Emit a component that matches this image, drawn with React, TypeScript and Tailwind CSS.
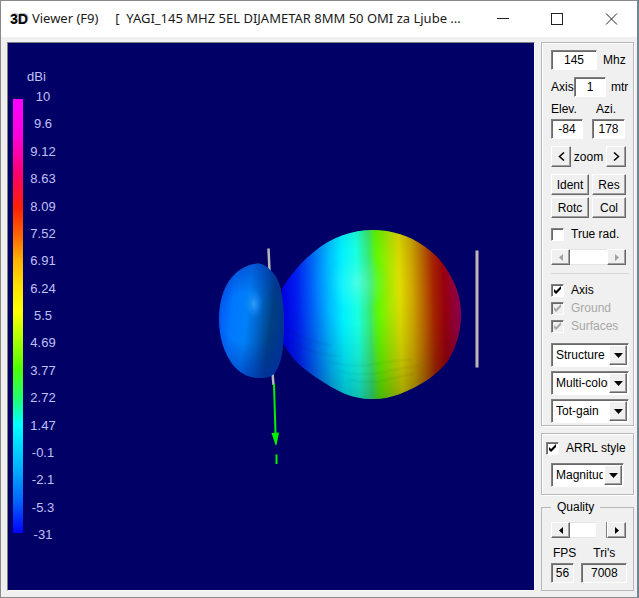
import type { ReactNode } from "react";
import clsx from "clsx";

const gains = [
  "10", "9.6", "9.12", "8.63", "8.09", "7.52", "6.91", "6.24", "5.5",
  "4.69", "3.77", "2.72", "1.47", "-0.1", "-2.1", "-5.3", "-31",
];

const raised =
  "border border-t-white border-l-white border-r-[#696969] border-b-[#696969] bg-[#f0f0f0] shadow-[inset_-1px_-1px_0_#a0a0a0]";
const sunken =
  "border border-t-[#808080] border-l-[#808080] border-r-white border-b-white shadow-[inset_1px_1px_0_#696969]";

function TitleBar() {
  return (
    <header className="flex h-9 items-center bg-white text-[13px] text-[#1a1a1a]">
      <span className="pl-[9px] font-['Liberation_Sans'] text-sm font-bold text-black [text-shadow:1px_-1px_0_#bbbbbb]">
        3D
      </span>
      <h1 className="min-w-0 flex-1 truncate whitespace-pre pl-1 font-['Noto_Sans']">
        {"Viewer (F9)     [  YAGI_145 MHZ 5EL DIJAMETAR 8MM 50 OMI za Ljube ..."}
      </h1>
      <div className="flex">
        <button aria-label="Minimize" className="grid h-9 w-12 place-items-center">
          <svg width="13" height="13" viewBox="0 0 13 13" stroke="#222" fill="none">
            <path d="M1 5.5h12" />
          </svg>
        </button>
        <button aria-label="Maximize" className="grid h-9 w-[60px] place-items-center">
          <svg width="13" height="13" viewBox="0 0 13 13" stroke="#222" fill="none">
            <rect x="1.5" y="0.5" width="11" height="11" />
          </svg>
        </button>
        <button aria-label="Close" className="grid h-9 w-[51px] place-items-center">
          <svg width="13" height="13" viewBox="0 0 13 13" stroke="#222" fill="none">
            <path d="M1 0.500l11 11M12 0.500l-11 11" />
          </svg>
        </button>
      </div>
    </header>
  );
}

function GainScale() {
  return (
    <div className="w-[52px] shrink-0 pt-[27px] text-[13px] leading-[14px] text-[#c0c0f8]">
      <div className="pl-[19px]">dBi</div>
      <div className="mt-[6px] flex pl-[5px]">
        <div className="my-[9px] w-[10px] bg-[linear-gradient(to_bottom,#ff00ff_0%,#ff00e0_8%,#ff0070_17%,#ff2000_25%,#ff6000_31%,#ffb000_37%,#ffe000_43%,#ffff00_49%,#b0ff00_55%,#50ff00_62%,#20ff70_69%,#00ffff_75%,#00b0ff_85%,#0060ff_93%,#0000ff_100%)]" />
        <ol className="flex h-[452px] flex-1 flex-col justify-between pl-[3px] text-center">
          {gains.map((gain) => (
            <li key={gain}>{gain}</li>
          ))}
        </ol>
      </div>
    </div>
  );
}

function Pattern() {
  return (
    <svg
      className="min-w-0 flex-1"
      viewBox="60 43 474 547"
      role="img"
      aria-label="Radiation pattern"
    >
      <defs>
        <linearGradient id="gain" gradientUnits="userSpaceOnUse" x1="283" y1="316" x2="461" y2="311">
          <stop offset="0" stopColor="#0000ff" />
          <stop offset="0.08" stopColor="#0020ff" />
          <stop offset="0.17" stopColor="#0068ff" />
          <stop offset="0.26" stopColor="#00b8ff" />
          <stop offset="0.34" stopColor="#00f0ff" />
          <stop offset="0.42" stopColor="#18ffe0" />
          <stop offset="0.49" stopColor="#38e870" />
          <stop offset="0.535" stopColor="#60f800" />
          <stop offset="0.6" stopColor="#a4e800" />
          <stop offset="0.66" stopColor="#e0e000" />
          <stop offset="0.73" stopColor="#d8b000" />
          <stop offset="0.79" stopColor="#c87000" />
          <stop offset="0.85" stopColor="#b82800" />
          <stop offset="0.91" stopColor="#b00010" />
          <stop offset="1" stopColor="#b00064" />
        </linearGradient>
        <radialGradient id="shade" gradientUnits="userSpaceOnUse" cx="358" cy="286" r="125">
          <stop offset="0.3" stopColor="#000" stopOpacity="0" />
          <stop offset="0.7" stopColor="#000" stopOpacity="0.14" />
          <stop offset="1" stopColor="#000" stopOpacity="0.3" />
        </radialGradient>
        <radialGradient id="glint" gradientUnits="userSpaceOnUse" cx="358" cy="283" r="30">
          <stop offset="0" stopColor="#90ffe8" stopOpacity="0.4" />
          <stop offset="1" stopColor="#40ffff" stopOpacity="0" />
        </radialGradient>
        <linearGradient id="back" gradientUnits="userSpaceOnUse" x1="219" y1="316" x2="284" y2="324">
          <stop offset="0" stopColor="#005cf4" />
          <stop offset="0.2" stopColor="#0078ff" />
          <stop offset="0.42" stopColor="#0080f8" />
          <stop offset="0.62" stopColor="#0060c4" />
          <stop offset="0.8" stopColor="#004080" />
          <stop offset="1" stopColor="#003890" />
        </linearGradient>
        <radialGradient id="backShade" gradientUnits="userSpaceOnUse" cx="248" cy="318" r="62">
          <stop offset="0.4" stopColor="#0020a0" stopOpacity="0" />
          <stop offset="1" stopColor="#0028a8" stopOpacity="0.55" />
        </radialGradient>
        <radialGradient id="backGlint" cx="0.5" cy="0.5" r="0.5">
          <stop offset="0" stopColor="#38a8ff" stopOpacity="0.8" />
          <stop offset="1" stopColor="#1890ff" stopOpacity="0" />
        </radialGradient>
        <clipPath id="mainLobe">
          <path d="M282 289C290 275 302 261 315 251C332 237 352 230 373 230C392 230 410 236 424 246C434 253 441 260 447 270C456 284 461 298 461 314C461 332 456 348 447 362C437 375 420 386 400 394C391 397 383 399 373 399C362 399 353 397 343 393C334 389 326 384 317 378C308 372 300 366 293 358C289 353 286 348 282 342Z" />
        </clipPath>
      </defs>

      <g clipPath="url(#mainLobe)">
        <rect x="280" y="228" width="184" height="174" fill="url(#gain)" />
        <rect x="280" y="228" width="184" height="174" fill="url(#shade)" />
        <rect x="325" y="250" width="66" height="66" fill="url(#glint)" />
        <g fill="none" stroke="#000" strokeOpacity="0.03" strokeWidth="3" strokeLinecap="round">
          <path d="M288 330q20 12 42 15" />
          <path d="M292 342q24 14 48 14" />
          <path d="M330 362q24 6 46 2t34-4" />
          <path d="M338 371q24 6 46 1t34-6" />
          <path d="M350 380q20 4 36 0t26-6" />
        </g>
      </g>

      <g fill="none" stroke="#b8b8b8" strokeWidth="3">
        <path strokeWidth="2.500" d="M268.500 248.500L269.500 271" />
        <path strokeWidth="2.500" d="M272.500 373L273.500 385" />
        <path stroke="#c0b8b0" d="M477 250.500V367.500" />
      </g>

      <g>
        <path
          d="M258 263.500C264 264 269 268 272 272C280 278 284 298 284 323C284 343 283 361 275 373C271 377 266 378 260 378C249 378 241 374 233 365C224 353 219 337 219 320C219 302 223 288 232 277C240 268 249 264 258 263.500Z"
          fill="url(#back)"
        />
        <path
          d="M258 263.500C264 264 269 268 272 272C280 278 284 298 284 323C284 343 283 361 275 373C271 377 266 378 260 378C249 378 241 374 233 365C224 353 219 337 219 320C219 302 223 288 232 277C240 268 249 264 258 263.500Z"
          fill="url(#backShade)"
        />
        <ellipse cx="254" cy="304" rx="9" ry="15" fill="url(#backGlint)" />
      </g>

      <g stroke="#00f000" fill="#00f000">
        <path strokeWidth="2" d="M274 384L275.500 434" />
        <path stroke="none" d="M271.500 433L279 432.500L276.500 445H275.500Z" />
        <path strokeWidth="2" d="M276.500 454.500V464" />
      </g>
    </svg>
  );
}

function Check({ label, checked, disabled, className }: {
  label: string;
  checked?: boolean;
  disabled?: boolean;
  className?: string;
}) {
  return (
    <label className={clsx("flex items-center gap-[7px] whitespace-nowrap", disabled && "text-[#a8a8a8]", className)}>
      <span className="grid">
        <input
          type="checkbox"
          defaultChecked={checked}
          disabled={disabled}
          className={clsx("peer col-start-1 row-start-1 size-[13px] appearance-none", sunken, disabled ? "bg-[#f0f0f0]" : "bg-white")}
        />
        <svg
          viewBox="0 0 13 13"
          className="pointer-events-none col-start-1 row-start-1 hidden size-[13px] peer-checked:block"
          fill="currentColor"
        >
          <path d="M3 5l2 2 5-5v3l-5 5-2-2z" />
        </svg>
      </span>
      {label}
    </label>
  );
}

function Dropdown({ label, options, className }: { label: string; options: string[]; className: string }) {
  return (
    <div className={clsx("relative h-6 bg-white", sunken, className)}>
      <select aria-label={label} className="h-full w-full appearance-none overflow-hidden bg-transparent pl-1 pr-5 leading-5">
        {options.map((option) => (
          <option key={option}>{option}</option>
        ))}
      </select>
      <span className={clsx("pointer-events-none absolute inset-y-px right-px grid w-[18px] place-items-center", raised)}>
        <svg width="9" height="5" viewBox="0 0 9 5">
          <path d="M0 0h9L4.500 5z" />
        </svg>
      </span>
    </div>
  );
}

function ScrollBar({ label, value, disabled }: { label: string; value?: number; disabled?: boolean }) {
  return (
    <div className={clsx("flex h-4 w-[75px]", disabled && "text-[#a0a0a0]")}>
      <button aria-label={label + " down"} disabled={disabled} className={clsx("grid w-[19px] place-items-center", raised)}>
        <svg width="4" height="7" viewBox="0 0 4 7" fill="currentColor"><path d="M4 0v7L0 3.500z" /></svg>
      </button>
      <input
        type="range"
        aria-label={label}
        defaultValue={value}
        disabled={disabled}
        className={clsx(
          "min-w-0 flex-1 appearance-none border-y border-[#e4e4e4] bg-white [&::-webkit-slider-thumb]:h-4 [&::-webkit-slider-thumb]:appearance-none [&::-webkit-slider-thumb]:border-r [&::-webkit-slider-thumb]:border-[#808080] [&::-webkit-slider-thumb]:bg-[#f0f0f0]",
          disabled ? "[&::-webkit-slider-thumb]:w-0 [&::-webkit-slider-thumb]:opacity-0" : "[&::-webkit-slider-thumb]:w-[11px]",
        )}
      />
      <button aria-label={label + " up"} disabled={disabled} className={clsx("grid w-[19px] place-items-center", raised)}>
        <svg width="4" height="7" viewBox="0 0 4 7" fill="currentColor"><path d="M0 0v7l4-3.500z" /></svg>
      </button>
    </div>
  );
}

function Field({ id, value, className, readOnly }: { id: string; value: string; className: string; readOnly?: boolean }) {
  return (
    <input
      id={id}
      defaultValue={value}
      readOnly={readOnly}
      className={clsx("h-5 text-center", sunken, readOnly ? "bg-[#f0f0f0]" : "bg-white", className)}
    />
  );
}

function PushButton({ children, className, label }: { children: ReactNode; className: string; label?: string }) {
  return (
    <button aria-label={label} className={clsx("grid h-[21px] place-items-center", raised, className)}>
      {children}
    </button>
  );
}

function Controls() {
  return (
    <aside className="w-[93px] shrink-0 text-xs leading-[14px] text-black">
      <section className="border border-[#b8b8b8] pb-[2px] pl-[9px] pt-[7px] shadow-[inset_1px_1px_0_#fff,1px_1px_0_#fff]">
        <div className="flex items-center gap-[6px]">
          <Field id="freq" value="145" className="w-[46px]" />
          <label htmlFor="freq">Mhz</label>
        </div>
        <div className="mt-[7px] flex items-center">
          <label htmlFor="axis" className="w-[23px]">Axis</label>
          <Field id="axis" value="1" className="w-8" />
          <span className="pl-[5px]">mtr</span>
        </div>
        <div className="mt-[5px] flex gap-[9px]">
          <div className="flex flex-col gap-[3px]">
            <label htmlFor="elev">Elev.</label>
            <Field id="elev" value="-84" className="w-8" />
          </div>
          <div className="flex flex-col gap-[3px]">
            <label htmlFor="azi" className="pl-1">Azi.</label>
            <Field id="azi" value="178" className="w-[33px]" />
          </div>
        </div>
        <div className="mt-[7px] flex w-[75px] items-center justify-between">
          <PushButton className="w-5" label="Zoom out">
            <svg width="7" height="9" viewBox="0 0 7 9" fill="none" stroke="#000" strokeWidth="1.500"><path d="M6 0.500L1.500 4.500L6 8.500" /></svg>
          </PushButton>
          zoom
          <PushButton className="w-5" label="Zoom in">
            <svg width="7" height="9" viewBox="0 0 7 9" fill="none" stroke="#000" strokeWidth="1.500"><path d="M1 0.500L5.500 4.500L1 8.500" /></svg>
          </PushButton>
        </div>
        <div className="mt-[7px] grid w-[75px] grid-cols-[38px_34px] justify-between gap-y-[2px]">
          <PushButton className="w-full">Ident</PushButton>
          <PushButton className="w-full">Res</PushButton>
          <PushButton className="w-full">Rotc</PushButton>
          <PushButton className="w-full">Col</PushButton>
        </div>
        <Check label="True rad." className="mt-[9px]" />
        <div className="mt-2">
          <ScrollBar label="Radius" disabled />
        </div>
        <hr className="mr-1 mt-2 border-[#d8d8d8]" />
        <div className="mt-[9px] flex flex-col gap-1">
          <Check label="Axis" checked />
          <Check label="Ground" checked disabled />
          <Check label="Surfaces" checked disabled />
        </div>
        <div className="mt-[10px] flex flex-col gap-1">
          <Dropdown label="View" options={["Structure", "Pattern"]} className="w-[78px]" />
          <Dropdown label="Colors" options={["Multi-color", "Mono"]} className="w-[78px]" />
          <Dropdown label="Gain" options={["Tot-gain", "Hor-gain"]} className="w-[78px]" />
        </div>
      </section>

      <section className="mt-[7px] border border-[#b8b8b8] pb-[7px] pl-1 pt-[7px] shadow-[inset_1px_1px_0_#fff,1px_1px_0_#fff]">
        <Check label="ARRL style" checked />
        <div className="mt-2 pl-[5px]">
          <Dropdown label="Scale" options={["Magnitude", "Phase"]} className="w-[73px]" />
        </div>
      </section>

      <fieldset className="mt-[5px] border border-[#b8b8b8] pb-[7px] pl-[9px]">
        <legend className="px-[6px]">Quality</legend>
        <div className="mt-2">
          <ScrollBar label="Quality" value={100} />
        </div>
        <div className="mt-2 flex gap-[5px]">
          <div className="flex flex-col gap-[3px]">
            <label htmlFor="fps" className="pl-[2px]">FPS</label>
            <Field id="fps" value="56" readOnly className="w-[23px]" />
          </div>
          <div className="flex flex-col gap-[3px]">
            <label htmlFor="tris" className="pl-3">Tri's</label>
            <Field id="tris" value="7008" readOnly className="w-[46px]" />
          </div>
        </div>
      </fieldset>
    </aside>
  );
}

export default function App() {
  return (
    <div className="flex min-h-screen flex-col border border-r-2 border-[#8a8a8a] border-r-[#6f8794] bg-[#f0f0f0] font-['Liberation_Sans',sans-serif]">
      <TitleBar />
      <main className="flex flex-1 gap-[6px] pb-[6px] pl-[6px] pr-[3px] pt-[5px]">
        <div className="flex min-w-0 flex-1 border border-[#fafafa] border-l-[#808080] border-t-[#808080] bg-[#000066]">
          <GainScale />
          <Pattern />
        </div>
        <Controls />
      </main>
    </div>
  );
}
